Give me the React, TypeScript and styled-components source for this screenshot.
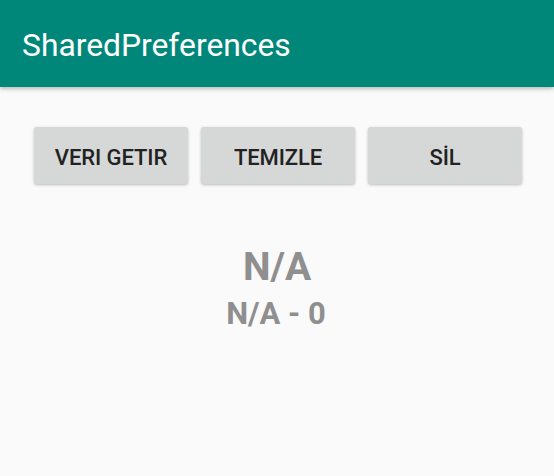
import React from "react";
import styled, { createGlobalStyle } from "styled-components";

const Global = createGlobalStyle`
  html, body { margin: 0; padding: 0; background: #fafafa; }
  body { font-family: Roboto, "Noto Sans", sans-serif; }
`;

const Screen = styled.div`
  width: 554px;
  height: 476px;
  background: #fafafa;
  display: flex;
  flex-direction: column;
  overflow: hidden;
`;

const AppBar = styled.header`
  height: 87px;
  background: #00877a;
  box-shadow: 0 2px 4px rgba(0, 0, 0, 0.25);
  display: flex;
  align-items: center;
  padding: 2px 0 0 22px;
  box-sizing: border-box;
  position: relative;
  z-index: 1;
`;

const Title = styled.h1`
  margin: 0;
  font-family: Roboto, sans-serif;
  font-weight: 400;
  font-size: 31.8px;
  color: #ffffff;
`;

const ButtonRow = styled.div`
  display: flex;
  gap: 13px;
  padding: 40px 32px 0 34px;
`;

const Button = styled.button`
  width: 154px;
  height: 57px;
  border: none;
  border-radius: 3px;
  background: #d6d7d7;
  box-shadow: 0 1px 3px rgba(0, 0, 0, 0.25);
  font-family: Roboto, sans-serif;
  font-weight: 500;
  font-size: 22px;
  letter-spacing: -0.1px;
  color: #222222;
  padding: 3px 0 0 0;
`;

const Result = styled.div`
  display: flex;
  flex-direction: column;
  align-items: center;
  padding-top: 60px;
  color: #8f8f8f;
  font-family: Roboto, sans-serif;
  font-weight: 700;
`;

const Big = styled.div`
  font-size: 39px;
  line-height: 46px;
`;

const Small = styled.div`
  font-size: 31px;
  line-height: 36px;
  margin-top: 6px;
  margin-left: -2px;
`;

export default function App() {
  return (
    <Screen>
      <Global />
      <AppBar>
        <Title>SharedPreferences</Title>
      </AppBar>
      <ButtonRow>
        <Button>VERI GETIR</Button>
        <Button>TEMIZLE</Button>
        <Button>SİL</Button>
      </ButtonRow>
      <Result>
        <Big>N/A</Big>
        <Small>N/A - 0</Small>
      </Result>
    </Screen>
  );
}
